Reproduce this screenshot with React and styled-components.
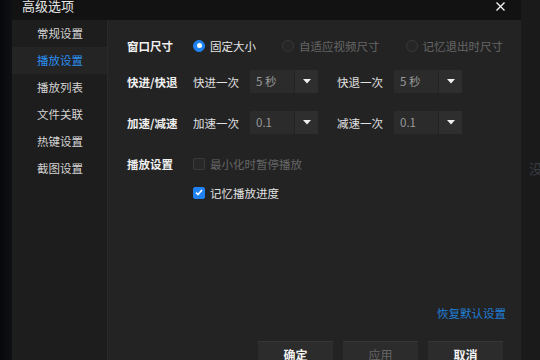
import React from "react";
import styled, { createGlobalStyle } from "styled-components";

const GlobalStyle = createGlobalStyle`
  html, body {
    margin: 0;
    padding: 0;
    background: #0b0c0e;
    overflow: hidden;
  }
  body {
    font-family: "Noto Sans CJK SC", "Noto Sans", sans-serif;
    font-size: 11.5px;
  }
`;

const Page = styled.div`
  width: 540px;
  height: 360px;
  display: flex;
  overflow: hidden;
`;

const LeftEdge = styled.div`
  width: 12px;
  flex-shrink: 0;
  background: linear-gradient(to right, #07080a, #0f1013);
`;

const RightEdge = styled.div`
  flex: 1;
  background: #1a1a1a;
  padding: 158px 0 0 8px;
  color: #3b3e44;
  font-size: 14px;
  overflow: hidden;
  white-space: nowrap;
`;

const Dialog = styled.div`
  width: 509px;
  height: 367px;
  flex-shrink: 0;
  display: flex;
  flex-direction: column;
  background: #232323;
`;

const TitleBar = styled.div`
  height: 20px;
  flex-shrink: 0;
  background: #121212;
  display: flex;
  justify-content: space-between;
  align-items: flex-start;
  padding: 0 16px 0 10px;
`;

const Title = styled.div`
  font-size: 13px;
  line-height: 14px;
  margin-top: -1px;
  color: #e6e6e6;
`;

const Close = styled.svg`
  margin-top: 2px;
`;

const Body = styled.div`
  flex: 1;
  display: flex;
  min-height: 0;
`;

const Sidebar = styled.div`
  width: 95px;
  flex-shrink: 0;
  background: #1d1d1d;
  display: flex;
  flex-direction: column;
`;

const NavItem = styled.div`
  height: 27px;
  line-height: 27px;
  padding-left: 25px;
  font-size: 11.5px;
  color: ${(p) => (p.active ? "#2a8ef0" : "#d4d4d4")};
  background: ${(p) => (p.active ? "#242424" : "transparent")};
`;

const Content = styled.div`
  flex: 1;
  min-width: 0;
  display: flex;
  flex-direction: column;
  border-left: 1px solid #2a2a2a;
  padding: 0 18px 0 19px;
`;

const Row = styled.div`
  display: flex;
  align-items: center;
  height: 23px;
  white-space: nowrap;
  margin-top: ${(p) => p.top}px;
`;

const Label = styled.div`
  width: 66px;
  flex-shrink: 0;
  font-weight: 700;
  color: #f0f0f0;
`;

const Option = styled.label`
  display: flex;
  align-items: center;
  flex-shrink: 0;
  gap: 5px;
  margin-right: 26px;
  color: ${(p) => (p.disabled ? "#666666" : "#e2e2e2")};
`;

const RadioDot = styled.span`
  width: 12px;
  height: 12px;
  box-sizing: border-box;
  border-radius: 50%;
  display: flex;
  align-items: center;
  justify-content: center;
  background: ${(p) => (p.checked ? "#1f82f0" : "#262626")};
  border: 1px solid ${(p) => (p.checked ? "#1f82f0" : "#393939")};
  &::after {
    content: "";
    display: ${(p) => (p.checked ? "block" : "none")};
    width: 5px;
    height: 5px;
    border-radius: 50%;
    background: #ffffff;
  }
`;

const Box = styled.span`
  width: 12px;
  height: 12px;
  box-sizing: border-box;
  border-radius: 2px;
  display: flex;
  align-items: center;
  justify-content: center;
  background: ${(p) => (p.checked ? "#1f82f0" : "#282828")};
  border: 1px solid ${(p) => (p.checked ? "#1f82f0" : "#3a3a3a")};
`;

const SubLabel = styled.span`
  width: 57px;
  flex-shrink: 0;
  color: #e0e0e0;
`;

const SelectBox = styled.div`
  display: flex;
  flex-shrink: 0;
  height: 23px;
  width: 68px;
  margin-right: ${(p) => p.gap || 0}px;
`;

const SelectValue = styled.div`
  width: 44px;
  background: #2b2b2b;
  color: #9a9a9a;
  line-height: 23px;
  padding-left: 6px;
  box-sizing: border-box;
`;

const SelectArrow = styled.div`
  flex: 1;
  margin-left: 1px;
  background: #2e2e2e;
  display: flex;
  align-items: center;
  justify-content: center;
`;

const Footer = styled.div`
  margin-top: auto;
  display: flex;
  flex-direction: column;
`;

const ResetLink = styled.a`
  align-self: flex-end;
  margin-right: -3px;
  line-height: 16px;
  color: #1f7fd8;
  text-decoration: none;
`;

const Buttons = styled.div`
  display: flex;
  justify-content: flex-end;
  gap: 10px;
  margin-top: 20px;
`;

const Button = styled.button`
  width: 75px;
  height: 26px;
  padding: 0;
  border: none;
  border-top: 1px solid #363636;
  background: #2c2c2c;
  font-family: inherit;
  font-size: 12px;
  font-weight: ${(p) => (p.disabled ? 400 : 700)};
  color: ${(p) => (p.disabled ? "#656565" : "#f2f2f2")};
`;

const Select = ({ value, gap }) => (
  <SelectBox gap={gap}>
    <SelectValue>{value}</SelectValue>
    <SelectArrow>
      <svg width="8" height="5" viewBox="0 0 8 5">
        <path d="M0 0h8L4 4.5z" fill="#f0f0f0" />
      </svg>
    </SelectArrow>
  </SelectBox>
);

const Radio = ({ checked, disabled, children }) => (
  <Option disabled={disabled}>
    <RadioDot checked={checked} />
    {children}
  </Option>
);

const Check = ({ checked, disabled, children }) => (
  <Option disabled={disabled}>
    <Box checked={checked}>
      {checked && (
        <svg width="8" height="7" viewBox="0 0 8 7">
          <path d="M1 3.5l2 2L7 1" stroke="#fff" strokeWidth="1.6" fill="none" />
        </svg>
      )}
    </Box>
    {children}
  </Option>
);

const navItems = ["常规设置", "播放设置", "播放列表", "文件关联", "热键设置", "截图设置"];

export default function App() {
  return (
    <>
      <GlobalStyle />
      <Page>
        <LeftEdge />
        <Dialog>
          <TitleBar>
            <Title>高级选项</Title>
            <Close width="9" height="9" viewBox="0 0 9 9">
              <path d="M0.5 0.5l8 8M8.5 0.5l-8 8" stroke="#f2f2f2" strokeWidth="1.4" />
            </Close>
          </TitleBar>
          <Body>
            <Sidebar>
              {navItems.map((item) => (
                <NavItem key={item} active={item === "播放设置"}>
                  {item}
                </NavItem>
              ))}
            </Sidebar>
            <Content>
              <Row top={14}>
                <Label>窗口尺寸</Label>
                <Radio checked>固定大小</Radio>
                <Radio disabled>自适应视频尺寸</Radio>
                <Radio disabled>记忆退出时尺寸</Radio>
              </Row>
              <Row top={13}>
                <Label>快进/快退</Label>
                <SubLabel>快进一次</SubLabel>
                <Select value="5 秒" gap={19} />
                <SubLabel>快退一次</SubLabel>
                <Select value="5 秒" />
              </Row>
              <Row top={18}>
                <Label>加速/减速</Label>
                <SubLabel>加速一次</SubLabel>
                <Select value="0.1" gap={19} />
                <SubLabel>减速一次</SubLabel>
                <Select value="0.1" />
              </Row>
              <Row top={18}>
                <Label>播放设置</Label>
                <Check disabled>最小化时暂停播放</Check>
              </Row>
              <Row top={6}>
                <Label />
                <Check checked>记忆播放进度</Check>
              </Row>
              <Footer>
                <ResetLink>恢复默认设置</ResetLink>
                <Buttons>
                  <Button>确定</Button>
                  <Button disabled>应用</Button>
                  <Button>取消</Button>
                </Buttons>
              </Footer>
            </Content>
          </Body>
        </Dialog>
        <RightEdge>没</RightEdge>
      </Page>
    </>
  );
}
